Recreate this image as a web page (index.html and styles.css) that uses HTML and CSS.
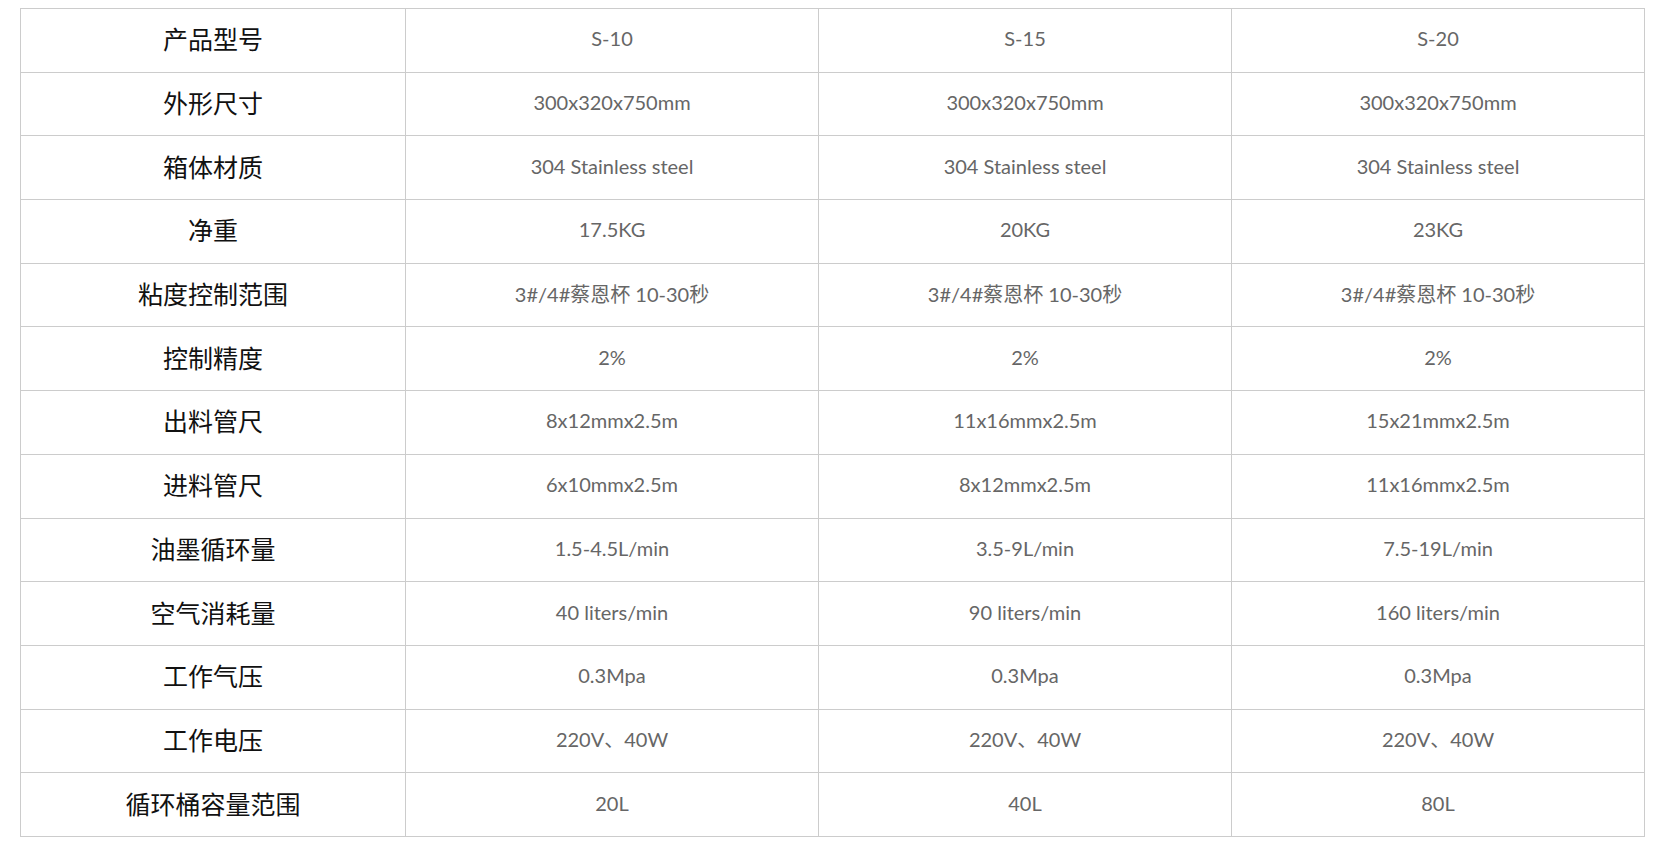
FILE: index.html
```html
<!DOCTYPE html>
<html lang="zh-CN">
<head>
<meta charset="utf-8">
<title>参数表</title>
<link rel="stylesheet" href="styles.css">
</head>
<body>
<div class="wrap">
<table class="spec">
<colgroup><col class="c-label"><col class="c-val"><col class="c-val"><col class="c-val"></colgroup>
<tbody>
<tr><th>产品型号</th><td>S-10</td><td>S-15</td><td>S-20</td></tr>
<tr><th>外形尺寸</th><td>300x320x750mm</td><td>300x320x750mm</td><td>300x320x750mm</td></tr>
<tr><th>箱体材质</th><td>304 Stainless steel</td><td>304 Stainless steel</td><td>304 Stainless steel</td></tr>
<tr><th>净重</th><td>17.5KG</td><td>20KG</td><td>23KG</td></tr>
<tr><th>粘度控制范围</th><td>3#/4#蔡恩杯 10-30秒</td><td>3#/4#蔡恩杯 10-30秒</td><td>3#/4#蔡恩杯 10-30秒</td></tr>
<tr><th>控制精度</th><td>2%</td><td>2%</td><td>2%</td></tr>
<tr><th>出料管尺</th><td>8x12mmx2.5m</td><td>11x16mmx2.5m</td><td>15x21mmx2.5m</td></tr>
<tr><th>进料管尺</th><td>6x10mmx2.5m</td><td>8x12mmx2.5m</td><td>11x16mmx2.5m</td></tr>
<tr><th>油墨循环量</th><td>1.5-4.5L/min</td><td>3.5-9L/min</td><td>7.5-19L/min</td></tr>
<tr><th>空气消耗量</th><td>40 liters/min</td><td>90 liters/min</td><td>160 liters/min</td></tr>
<tr><th>工作气压</th><td>0.3Mpa</td><td>0.3Mpa</td><td>0.3Mpa</td></tr>
<tr><th>工作电压</th><td>220V、40W</td><td>220V、40W</td><td>220V、40W</td></tr>
<tr><th>循环桶容量范围</th><td>20L</td><td>40L</td><td>80L</td></tr>
</tbody>
</table>
</div>
</body>
</html>
```

FILE: styles.css
```css
html, body {
  margin: 0;
  padding: 0;
  background: #fff;
}
.wrap {
  padding: 8px 0 0 20px;
}
.spec {
  border-collapse: collapse;
  table-layout: fixed;
  width: 1625px;
  border: 1px solid #ccc;
}
.c-label { width: 385px; }
.c-val { width: 413px; }
.spec th,
.spec td {
  border: 1px solid #ccc;
  height: 63.7px;
  padding: 0 0 4px;
  text-align: center;
  vertical-align: middle;
  box-sizing: border-box;
}
.spec th {
  font-family: "Noto Sans CJK SC", sans-serif;
  font-weight: 400;
  font-size: 25px;
  color: #111;
}
.spec td {
  font-family: Lato, "Noto Sans CJK SC", sans-serif;
  font-size: 20px;
  color: #666;
}
```
